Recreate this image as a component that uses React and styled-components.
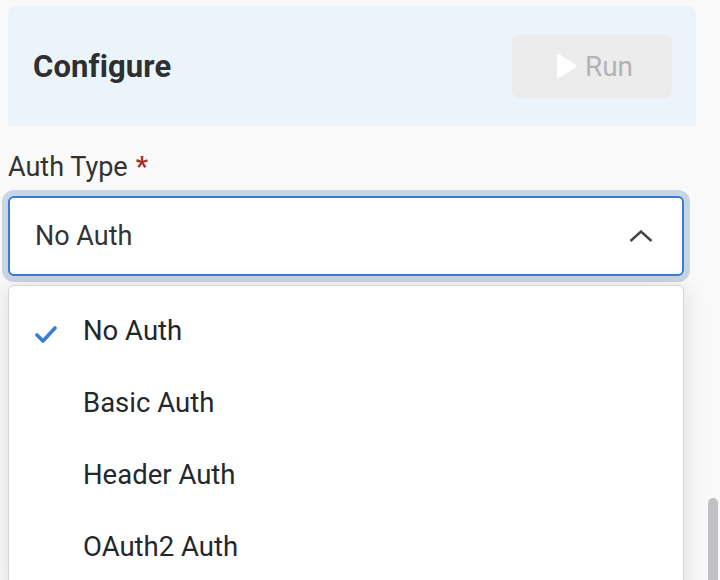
import React, { useState } from 'react';
import styled, { createGlobalStyle } from 'styled-components';

const GlobalStyle = createGlobalStyle`
  html, body {
    margin: 0;
    padding: 0;
    background: #f9f9f9;
    font-family: Roboto, "Liberation Sans", sans-serif;
    overflow: hidden;
  }
`;

const Page = styled.div`
  position: relative;
  height: 580px;
  padding: 6px 24px 0 8px;
  box-sizing: border-box;
  overflow: hidden;
`;

const Header = styled.div`
  display: flex;
  align-items: center;
  justify-content: space-between;
  height: 120px;
  padding: 0 24px 0 25px;
  background: #ebf3fb;
  border-radius: 8px 8px 0 0;
`;

const Title = styled.h2`
  margin: 0;
  font-size: 31px;
  font-weight: 700;
  color: #2f2f2f;
  letter-spacing: 0.1px;
`;

const RunButton = styled.button`
  display: flex;
  align-items: center;
  justify-content: center;
  gap: 8px;
  width: 160px;
  height: 64px;
  padding: 0 0 0 4px;
  border: none;
  border-radius: 8px;
  background: #ececec;
  color: #b3b3b3;
  font-family: inherit;
  font-size: 28px;
  cursor: not-allowed;
`;

const Field = styled.div`
  display: flex;
  flex-direction: column;
  margin-top: 25px;
`;

const Label = styled.label`
  font-size: 27px;
  line-height: 32px;
  color: #333333;
`;

const Required = styled.span`
  color: #a8302a;
  font-weight: 700;
  margin-left: 8px;
`;

const SelectBox = styled.div`
  display: flex;
  align-items: center;
  justify-content: space-between;
  height: 80px;
  margin-top: 13px;
  padding: 0 29px 0 25px;
  box-sizing: border-box;
  width: 676px;
  background: #ffffff;
  border: 2px solid #3a7bd5;
  border-radius: 6px;
  box-shadow: 0 0 0 6px #c8d6e4;
  font-size: 27px;
  color: #333333;
`;

const Menu = styled.ul`
  list-style: none;
  margin: 9px 0 0;
  padding: 8px 0;
  width: 676px;
  box-sizing: border-box;
  background: #ffffff;
  border: 1px solid #d6d6d9;
  border-radius: 6px;
  box-shadow: 0 2px 24px rgba(0, 0, 0, 0.12);
`;

const Option = styled.li`
  display: flex;
  align-items: center;
  height: 72px;
  padding-left: 26px;
  font-size: 27.5px;
  color: ${props => (props.selected ? '#22262b' : '#24282d')};
  cursor: pointer;
`;

const CheckSlot = styled.span`
  display: flex;
  align-items: center;
  width: 48px;
  height: 100%;
  padding-top: 8px;
  box-sizing: border-box;
`;

const ScrollThumb = styled.div`
  position: absolute;
  top: 498px;
  right: 2px;
  bottom: -10px;
  width: 10px;
  border-radius: 5px;
  background: #c1c1c5;
`;

const PlayIcon = () => (
  <svg width="22" height="26" viewBox="0 0 22 26">
    <path
      d="M2 2.5 C2 1 3.4 0.4 4.5 1.3 L20.5 11.6 C21.5 12.3 21.5 13.7 20.5 14.4 L4.5 24.7 C3.4 25.6 2 25 2 23.5 Z"
      fill="#ffffff"
    />
  </svg>
);

const ChevronUp = () => (
  <svg width="24" height="12" viewBox="0 0 24 12">
    <path d="M1.5 11 L12 1.5 L22.5 11" fill="none" stroke="#444" strokeWidth="2.4" />
  </svg>
);

const Check = () => (
  <svg width="22" height="17" viewBox="0 0 22 17">
    <path
      d="M2 9 L8 15 L20 2"
      fill="none"
      stroke="#3a7bd5"
      strokeWidth="3.6"
      strokeLinecap="round"
      strokeLinejoin="round"
    />
  </svg>
);

const options = ['No Auth', 'Basic Auth', 'Header Auth', 'OAuth2 Auth'];

export default function App() {
  const [value, setValue] = useState('No Auth');

  return (
    <>
      <GlobalStyle />
      <Page>
        <Header>
          <Title>Configure</Title>
          <RunButton disabled>
            <PlayIcon />
            Run
          </RunButton>
        </Header>

        <Field>
          <Label>
            Auth Type<Required>*</Required>
          </Label>
          <SelectBox>
            <span>{value}</span>
            <ChevronUp />
          </SelectBox>
          <Menu>
            {options.map(opt => (
              <Option key={opt} selected={opt === value} onClick={() => setValue(opt)}>
                <CheckSlot>{opt === value && <Check />}</CheckSlot>
                {opt}
              </Option>
            ))}
          </Menu>
        </Field>
        <ScrollThumb />
      </Page>
    </>
  );
}
